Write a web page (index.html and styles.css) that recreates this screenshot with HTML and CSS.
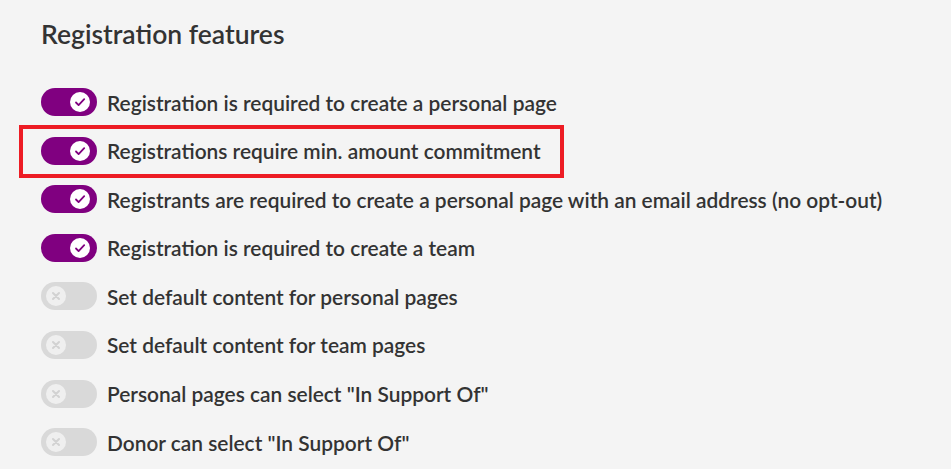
FILE: index.html
```html
<!DOCTYPE html>
<html lang="en">
<head>
    <meta charset="UTF-8">
    <title>Registration features</title>
    <link rel="stylesheet" href="styles.css">
</head>
<body>
    <div class="panel">
        <h2 class="title">Registration features</h2>
        <ul class="features">
            <li class="feature"><span class="switch on"><span class="knob"><svg viewBox="0 0 20 20"><path d="M6 10.5l2.6 2.6L14.2 7.2"/></svg></span></span>Registration is required to create a personal page</li>
            <li class="feature highlight"><span class="switch on"><span class="knob"><svg viewBox="0 0 20 20"><path d="M6 10.5l2.6 2.6L14.2 7.2"/></svg></span></span>Registrations require min. amount commitment</li>
            <li class="feature"><span class="switch on"><span class="knob"><svg viewBox="0 0 20 20"><path d="M6 10.5l2.6 2.6L14.2 7.2"/></svg></span></span>Registrants are required to create a personal page with an email address (no opt-out)</li>
            <li class="feature"><span class="switch on"><span class="knob"><svg viewBox="0 0 20 20"><path d="M6 10.5l2.6 2.6L14.2 7.2"/></svg></span></span>Registration is required to create a team</li>
            <li class="feature"><span class="switch"><span class="knob"><svg viewBox="0 0 20 20"><path d="M7 7l6 6M13 7l-6 6"/></svg></span></span>Set default content for personal pages</li>
            <li class="feature"><span class="switch"><span class="knob"><svg viewBox="0 0 20 20"><path d="M7 7l6 6M13 7l-6 6"/></svg></span></span>Set default content for team pages</li>
            <li class="feature"><span class="switch"><span class="knob"><svg viewBox="0 0 20 20"><path d="M7 7l6 6M13 7l-6 6"/></svg></span></span>Personal pages can select "In Support Of"</li>
            <li class="feature"><span class="switch"><span class="knob"><svg viewBox="0 0 20 20"><path d="M7 7l6 6M13 7l-6 6"/></svg></span></span>Donor can select "In Support Of"</li>
        </ul>
    </div>
</body>
</html>
```

FILE: styles.css
```css
body {
    margin: 0;
    background: #f4f4f4;
    font-family: 'Lato', 'Liberation Sans', sans-serif;
    color: #333;
}
.panel {
    padding: 18px 41px;
}
.title {
    margin: 0;
    font-size: 26.5px;
    font-weight: 600;
    line-height: 32px;
    color: #333;
}
.features {
    list-style: none;
    margin: 38px 0 0;
    padding: 0;
}
.feature {
    display: flex;
    align-items: center;
    height: 28px;
    margin-bottom: 20.6px;
    font-size: 20.9px;
    font-weight: 600;
    position: relative;
}
.highlight::before {
    content: '';
    position: absolute;
    left: -22px;
    top: -12px;
    width: 537px;
    height: 45px;
    border: 4px solid #ed1c24;
}
.switch {
    position: relative;
    flex: none;
    width: 56px;
    height: 28px;
    border-radius: 14px;
    background: #d9d9d9;
    margin-right: 10px;
}
.switch.on {
    background: #800080;
}
.knob {
    position: absolute;
    top: 4px;
    left: 5px;
    width: 20px;
    height: 20px;
    border-radius: 50%;
    background: #efefef;
}
.switch.on .knob {
    left: auto;
    right: 7px;
    background: #fff;
}
.knob svg {
    display: block;
    width: 20px;
    height: 20px;
    fill: none;
    stroke: #d2d2d2;
    stroke-width: 2;
    stroke-linecap: round;
    stroke-linejoin: round;
}
.switch.on .knob svg {
    stroke: #800080;
    stroke-width: 1.8;
}
```
